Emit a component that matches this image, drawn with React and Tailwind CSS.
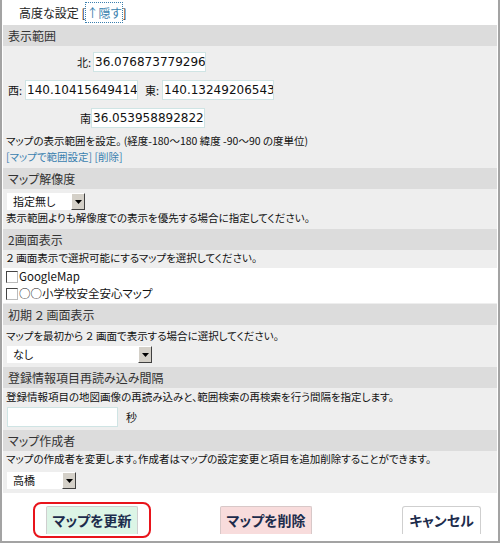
import React from 'react';

const jp = "[font-family:'Noto_Sans_CJK_JP','Noto_Sans',sans-serif] [font-feature-settings:'palt']";

function Header({ children }) {
  return (
    <div className="h-[21px] bg-[#dcdcdc] pl-[5px] flex items-center text-[12px] text-[#333]">
      {children}
    </div>
  );
}

function NumInput({ value, width = 'w-[113px]' }) {
  return (
    <input
      readOnly
      value={value}
      className={`${width} h-[20px] bg-white border border-[#cfe4e4] pl-[1px] text-[12px] text-[#111] outline-none [font-family:'DejaVu_Sans',sans-serif]`}
    />
  );
}

function Select({ label, width }) {
  return (
    <div className={`${width} h-[17px] bg-white flex items-stretch`}>
      <span className="flex-1 pl-[6px] text-[11px] leading-[17px] text-[#111]">{label}</span>
      <span className="w-[14px] bg-[#d4d0c8] border border-t-white border-l-white border-r-[#404040] border-b-[#404040] flex items-center justify-center">
        <svg width="7" height="4" viewBox="0 0 7 4">
          <path d="M0 0h7L3.5 4z" fill="#000" />
        </svg>
      </span>
    </div>
  );
}

function Check({ label }) {
  return (
    <div className="h-[17px] flex items-center pl-[3px]">
      <span className="w-[12px] h-[12px] bg-white border border-[#444] border-r-[#bbb] border-b-[#bbb] mr-[1px]" />
      {label && <span className="text-[11.5px] text-[#111]">{label}</span>}
    </div>
  );
}

export default function App() {
  return (
    <div className={`w-[500px] h-[543px] overflow-hidden bg-white border-x-2 border-b-2 border-[#a3a3a3] px-[1px] flex flex-col ${jp}`}>
      {/* 高度な設定 */}
      <div className="h-[25px] pl-[16px] flex items-center text-[12px] text-[#222]">
        高度な設定 [
        <span className="outline-1 outline-dotted outline-[#3a7fae] px-[1px] text-[#3a7fae] leading-[19px]">↑隠す</span>]
      </div>

      <Header>表示範囲</Header>
      <div className="bg-[#eeeeee] pt-[6px] pb-[3px] text-[10.5px] text-[#111]">
        <div className="flex items-center pl-[74px]">
          <span className="w-[16px] text-[11px]">北:</span>
          <NumInput value="36.0768737792969" />
        </div>
        <div className="flex items-center mt-[8px] pl-[5px]">
          <span className="w-[17px] text-[11px]">西:</span>
          <NumInput value="140.104156494141" />
          <span className="w-[17px] ml-[7px] text-[11px]">東:</span>
          <NumInput value="140.13249206543" width="w-[112px]" />
        </div>
        <div className="flex items-center mt-[8px] pl-[77px]">
          <span className="w-[11px] text-[11px]">南</span>
          <NumInput value="36.0539588928223" width="w-[114px]" />
        </div>
        <p className="pl-[3px] mt-[5px] leading-[16px]">マップの表示範囲を設定。 (経度-180～180 緯度 -90～90 の度単位)</p>
        <p className="pl-[3px] leading-[16px] text-[#3a7fae]">[マップで範囲設定] [削除]</p>
      </div>

      <Header>マップ解像度</Header>
      <div className="bg-[#eeeeee] pt-[4px] pb-[3px] text-[10.5px] text-[#111]">
        <div className="pl-[4px]">
          <Select label="指定無し" width="w-[78px]" />
        </div>
        <p className="pl-[3px] leading-[16px]">表示範囲よりも解像度での表示を優先する場合に指定してください。</p>
      </div>

      <Header>2画面表示</Header>
      <div className="bg-[#eeeeee] pb-[1px] text-[10.5px] text-[#111]">
        <p className="pl-[3px] leading-[16px]">２ 画面表示で選択可能にするマップを選択してください。</p>
        <div className="mt-[2px] h-[35px] bg-white overflow-hidden">
          <Check label="GoogleMap" />
          <Check label="○○小学校安全安心マップ" />
          <Check />
        </div>
      </div>

      <Header>初期 ２ 画面表示</Header>
      <div className="bg-[#eeeeee] pt-[3px] pb-[4px] text-[10.5px] text-[#111]">
        <p className="pl-[3px] leading-[16px]">マップを最初から ２ 画面で表示する場合に選択してください。</p>
        <div className="pl-[4px] mt-[2px]">
          <Select label="なし" width="w-[145px]" />
        </div>
      </div>

      <Header>登録情報項目再読み込み間隔</Header>
      <div className="bg-[#eeeeee] pt-[1px] pb-[3px] text-[10.5px] text-[#111]">
        <p className="pl-[3px] leading-[16px]">登録情報項目の地図画像の再読み込みと、範囲検索の再検索を行う間隔を指定します。</p>
        <div className="flex items-center pl-[4px] mt-[2px]">
          <NumInput value="" width="w-[111px]" />
          <span className="ml-[8px] text-[11px]">秒</span>
        </div>
      </div>

      <Header>マップ作成者</Header>
      <div className="bg-[#eeeeee] pb-[4px] text-[10.5px] text-[#111]">
        <p className="pl-[3px] leading-[16px]">マップの作成者を変更します。作成者はマップの設定変更と項目を追加削除することができます。</p>
        <div className="pl-[4px] mt-[5px]">
          <Select label="高橋" width="w-[69px]" />
        </div>
      </div>

      {/* ボタン */}
      <div className="flex items-start pt-[9px] text-[14px] font-bold text-[#1d2c4c]">
        <span className="ml-[30px] border-2 border-[#e8141b] rounded-[8px] px-[11px] py-[2px]">
          <button className="w-[92px] h-[28px] bg-[#dcf5e6] border border-b-0 border-[#cfcfcf] rounded-t-[2px]">マップを更新</button>
        </span>
        <button className="ml-[69px] mt-[4px] w-[92px] h-[28px] bg-[#f8dcdc] border border-b-0 border-[#d8c8c8] rounded-t-[2px]">マップを削除</button>
        <button className="ml-[90px] mt-[4px] w-[79px] h-[28px] bg-white border border-b-0 border-[#cfcfcf] rounded-t-[3px]">キャンセル</button>
      </div>
    </div>
  );
}
